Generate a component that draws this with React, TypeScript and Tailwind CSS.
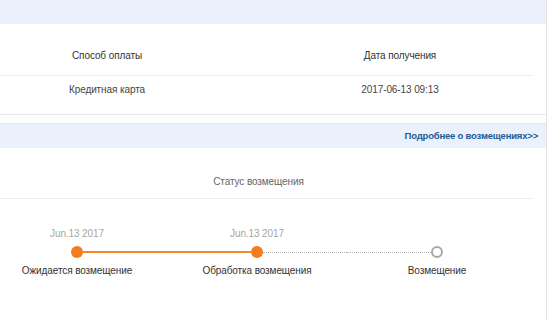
import React from 'react';

type Step = { date?: string; label: string; done: boolean };

const steps: Step[] = [
  { date: 'Jun.13 2017', label: 'Ожидается возмещение', done: true },
  { date: 'Jun.13 2017', label: 'Обработка возмещения', done: true },
  { label: 'Возмещение', done: false },
];

export default function App() {
  return (
    <div className="w-[550px] h-[320px] bg-white overflow-hidden font-['Liberation_Sans',Arial,sans-serif] text-[10px] leading-[14px] tracking-[-0.1px] text-[#333]">
      <div className="w-[547px] h-[320px] border-r border-[#e2e2e2]">
        <div className="h-[24px] bg-[#eaf1fc]" />

        {/* payment info */}
        <div className="border-b border-[#e6e6e6]">
          <div className="w-[533px] h-[52px] flex items-end pb-[12px] border-b border-[#ebebeb]">
            <div className="w-[214px] text-center">Способ оплаты</div>
            <div className="ml-[53px] w-[266px] text-center">Дата получения</div>
          </div>
          <div className="w-[533px] h-[38px] flex pt-[7px] text-[#444]">
            <div className="w-[214px] text-center">Кредитная карта</div>
            <div className="ml-[53px] w-[266px] text-center">2017-06-13 09:13</div>
          </div>
        </div>

        <div className="h-[8px]" />

        {/* refund status */}
        <div className="h-[25px] border-t border-[#dfe7f2] bg-[#eaf1fc] flex items-center justify-end pr-[8px]">
          <span className="font-bold text-[9.5px] tracking-[-0.2px] text-[#1d5b94]">Подробнее о возмещениях&gt;&gt;</span>
        </div>
        <div className="w-[533px] h-[51px] flex items-end justify-center pb-[9px] border-b border-[#ebebeb] text-[#666]">
          <span className="ml-[-16px]">Статус возмещения</span>
        </div>

        <div className="ml-[-13px] grid grid-cols-[180px_180px_180px] pt-[28px]">
          {steps.map((s, i) => (
            <div key={i} className="h-[14px] text-center text-[#a5a5a5]">{s.date ?? ''}</div>
          ))}
          {steps.map((s, i) => {
            const leftOrange = i > 0 && steps[i].done;
            const rightOrange = i < steps.length - 1 && steps[i + 1].done;
            return (
              <div key={i} className="h-[22px] flex items-center">
                <div className="flex-1">
                  {i > 0 &&
                    (leftOrange ? (
                      <div className="h-[2px] bg-[#f08a2c]" />
                    ) : (
                      <div className="border-t border-dotted border-[#b5b5b5]" />
                    ))}
                </div>
                {s.done ? (
                  <div className="w-[12px] h-[12px] rounded-full bg-[#f57d1f]" />
                ) : (
                  <div className="w-[12px] h-[12px] rounded-full border-2 border-[#a9a9a9] bg-white" />
                )}
                <div className="flex-1">
                  {i < steps.length - 1 &&
                    (rightOrange ? (
                      <div className="h-[2px] bg-[#f08a2c]" />
                    ) : (
                      <div className="border-t border-dotted border-[#b5b5b5]" />
                    ))}
                </div>
              </div>
            );
          })}
          {steps.map((s, i) => (
            <div key={i} className="pt-[1px] text-center text-[#333]">{s.label}</div>
          ))}
        </div>
      </div>
    </div>
  );
}
